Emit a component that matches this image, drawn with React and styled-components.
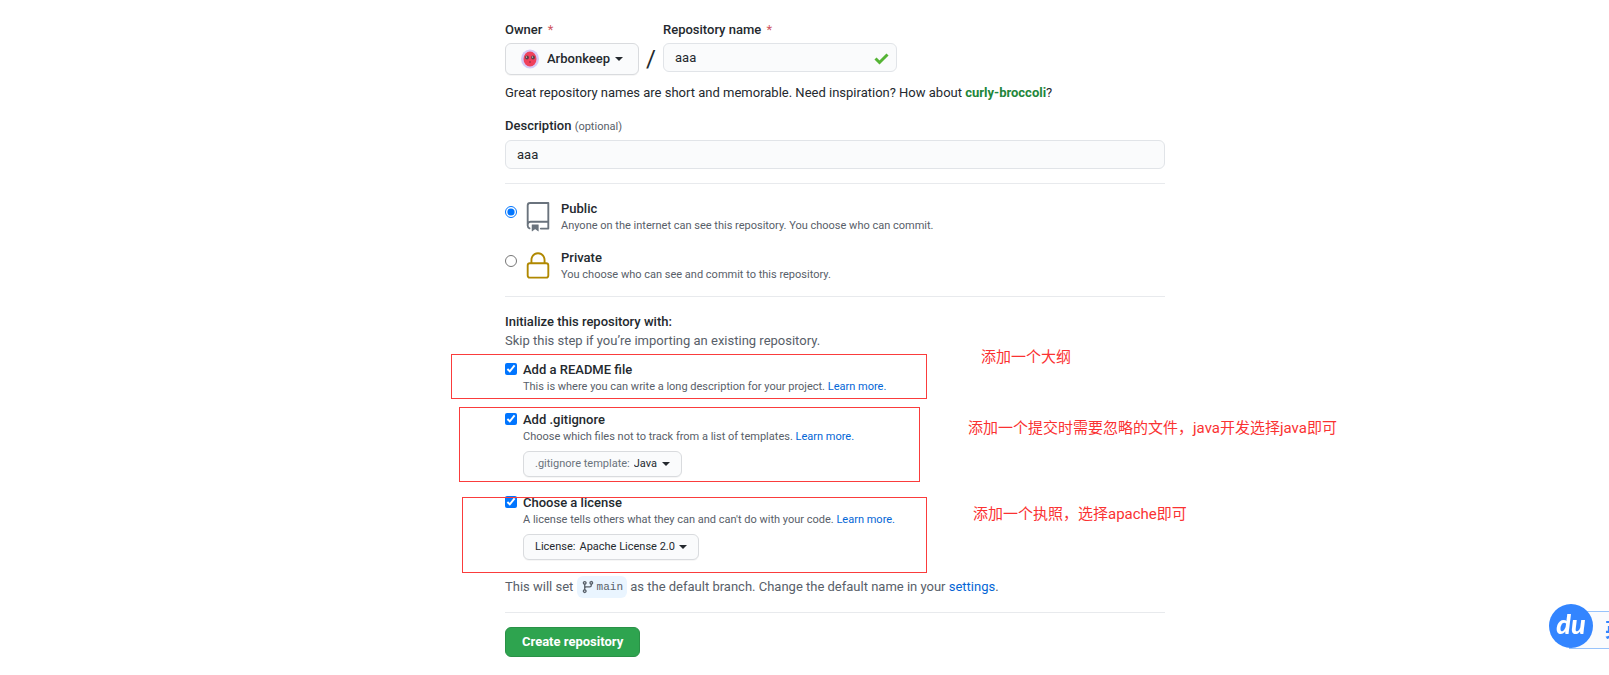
import React from 'react';
import styled, { createGlobalStyle } from 'styled-components';

const GlobalStyle = createGlobalStyle`
  *, *::before, *::after { box-sizing: border-box; }
  body {
    margin: 0;
    background: #fff;
    color: #24292e;
    font: 400 13px/18px Roboto, "Noto Sans CJK SC", sans-serif;
    overflow-x: hidden;
  }
  input, select, button { font: inherit; color: inherit; }
`;

const Page = styled.main`
  display: flex;
  justify-content: center;
  padding: 20px 0 18px 61px;
`;

const Form = styled.form`
  width: 100%;
  max-width: 660px;
`;

const Divider = styled.hr`
  height: 1px;
  margin: 14px 0;
  border: 0;
  background: #e8eaed;
`;

const NameRow = styled.div`
  display: flex;
  align-items: flex-start;
`;

const Field = styled.div`
  display: flex;
  flex-direction: column;
  align-items: ${(p) => (p.$fill ? 'stretch' : 'flex-start')};
  gap: 3px;
`;

const FieldLabel = styled.label`
  font-weight: 500;
  line-height: 20px;
`;

const Required = styled.span`
  margin-left: 2px;
  color: #d0575f;
  font-weight: 400;
`;

const Optional = styled.span`
  color: #586069;
  font-size: 11px;
  font-weight: 400;
`;

const Dropdown = styled.label`
  position: relative;
  display: inline-flex;
  align-items: center;
  gap: 4px;
  height: ${(p) => (p.$large ? '32px' : '26px')};
  padding: 0 ${(p) => (p.$large ? '15px' : '11px')};
  border: 1px solid #d9dbde;
  border-radius: 6px;
  background: #fafbfc;
  box-shadow: 0 1px 0 rgba(27, 31, 35, 0.04);
  color: ${(p) => (p.$muted ? '#6a737d' : '#24292e')};
  font-size: ${(p) => (p.$large ? '13px' : '11px')};
  cursor: pointer;
`;

const Select = styled.select`
  appearance: none;
  padding: 0;
  border: 0;
  background: transparent;
  color: #24292e;
  font-weight: ${(p) => (p.$strong ? 500 : 400)};
  cursor: pointer;
`;

const Caret = styled.span`
  width: 0;
  height: 0;
  border: 4px solid transparent;
  border-top-color: #24292e;
  border-bottom: 0;
`;

const Avatar = styled.svg`
  width: 18px;
  height: 20px;
  margin-right: 4px;
`;

const Slash = styled.span`
  width: 24px;
  padding-top: 23px;
  font-size: 24px;
  line-height: 32px;
  text-align: center;
`;

const InputFrame = styled.div`
  position: relative;
  width: ${(p) => (p.$short ? '234px' : '100%')};
`;

const TextInput = styled.input`
  display: block;
  width: 100%;
  height: 29px;
  padding: 0 11px;
  border: 1px solid #e1e4e8;
  border-radius: 6px;
  background: #fafbfc;
`;

const CheckMark = styled.svg`
  position: absolute;
  top: 10px;
  right: 8px;
  width: 15px;
  height: 12px;
`;

const Hint = styled.p`
  margin: 8px 0 13px;
  line-height: 20px;
`;

const Suggestion = styled.strong`
  color: #22863a;
  font-weight: 700;
`;

const Choices = styled.div`
  display: flex;
  flex-direction: column;
  gap: 15px;
`;

const Choice = styled.div`
  position: relative;
  display: flex;
  align-items: flex-start;
`;

const Tick = styled.input`
  flex: none;
  width: 12px;
  height: 12px;
  margin: ${(p) => (p.type === 'radio' ? '6px 6px 0 0' : '2px 6px 0 0')};
  accent-color: #0075ff;
`;

const ChoiceIcon = styled.svg`
  flex: none;
  width: 30px;
  height: 30px;
  margin: 2px 8px 0 0;
  fill: ${(p) => p.$tone};
`;

const ChoiceText = styled.div`
  display: flex;
  flex-direction: column;
  align-items: flex-start;
`;

const ChoiceTitle = styled.label`
  font-weight: 500;
`;

const Note = styled.span`
  color: #586069;
  font-size: 11px;
  line-height: 16px;
`;

const Link = styled.a`
  color: #0366d6;
  text-decoration: none;
`;

const Heading = styled.h2`
  margin: 0;
  font-size: 13px;
  font-weight: 500;
  line-height: 19px;
`;

const Muted = styled.p`
  margin: 0;
  color: #586069;
  line-height: ${(p) => (p.$roomy ? '22px' : '19px')};
`;

const RadioSection = styled.section`
  margin-bottom: -1px;
  padding-top: 2px;
`;

const InitSection = styled.section`
  display: flex;
  flex-direction: column;
  gap: 16px;
  padding-top: 1px;
`;

const Options = styled.div`
  display: flex;
  flex-direction: column;
  gap: 16px;
  margin: -5px 0 -1px;
`;

const DropdownSlot = styled.div`
  display: flex;
  padding: 6px 0 1px;
`;

const Highlight = styled.span`
  position: absolute;
  top: ${(p) => p.$top}px;
  left: ${(p) => p.$left}px;
  width: ${(p) => p.$width}px;
  height: ${(p) => p.$height}px;
  border: 1px solid #fa3c3c;
  pointer-events: none;
`;

const Remark = styled.span`
  position: absolute;
  top: ${(p) => p.$top}px;
  left: ${(p) => p.$left}px;
  color: #fa3232;
  font-size: 15px;
  line-height: 20px;
  white-space: nowrap;
`;

const Branch = styled.code`
  display: inline-flex;
  align-items: center;
  gap: 2px;
  height: 22px;
  padding: 0 4px;
  border-radius: 6px;
  background: #eaf5ff;
  font: 11px/22px "Liberation Mono", monospace;
  vertical-align: top;
`;

const BranchIcon = styled.svg`
  width: 14px;
  height: 14px;
  fill: #586069;
`;

const Submit = styled.button`
  display: block;
  height: 30px;
  padding: 0 16px;
  border: 1px solid #2a9147;
  border-radius: 6px;
  background: #2ea44f;
  color: #fff;
  font-weight: 700;
  cursor: pointer;
`;

const Assistant = styled.aside`
  position: fixed;
  right: 0;
  bottom: 26px;
  display: flex;
  align-items: center;
  width: 60px;
  height: 46px;
  overflow: hidden;
`;

const AssistantLogo = styled.span`
  z-index: 1;
  flex: none;
  width: 44px;
  height: 44px;
  border-radius: 50%;
  background: #3385ff;
  color: #fff;
  font: italic 900 27px/40px Lato, sans-serif;
  text-align: center;
`;

const AssistantMode = styled.span`
  flex: none;
  align-self: flex-end;
  width: 80px;
  height: 38px;
  margin-left: -24px;
  padding-left: 35px;
  border: 1px solid #98c3fb;
  background: #fafbfd;
  color: #3385ff;
  font: 700 20px/34px "Noto Sans CJK SC", sans-serif;
`;

const REPO = 'M3 2.75A2.75 2.75 0 015.75 0h14.5a.75.75 0 01.75.75v20.5a.75.75 0 01-.75.75h-6a.75.75 0 010-1.5h5.25v-4H6A1.5 1.5 0 004.5 18v.75c0 .716.43 1.334 1.05 1.605a.75.75 0 01-.6 1.374A3.25 3.25 0 013 18.75v-16zM19.5 1.5V15H6c-.546 0-1.059.146-1.5.401V2.75c0-.69.56-1.25 1.25-1.25H19.5z M7 18.25a.25.25 0 01.25-.25h5a.25.25 0 01.25.25v5.01a.25.25 0 01-.397.201l-2.206-1.604a.25.25 0 00-.294 0L7.397 23.46a.25.25 0 01-.397-.2v-5.01z';
const LOCK = 'M6 9V7.25C6 3.845 8.503 1 12 1s6 2.845 6 6.25V9h.5a2.5 2.5 0 012.5 2.5v8a2.5 2.5 0 01-2.5 2.5h-13A2.5 2.5 0 013 19.5v-8A2.5 2.5 0 015.5 9H6zm1.5-1.75C7.5 4.58 9.422 2.5 12 2.5c2.578 0 4.5 2.08 4.5 4.75V9h-9V7.25zm-3 4.25a1 1 0 011-1h13a1 1 0 011 1v8a1 1 0 01-1 1h-13a1 1 0 01-1-1v-8z';
const BRANCH = 'M11.75 2.5a.75.75 0 100 1.5.75.75 0 000-1.5zm-2.25.75a2.25 2.25 0 113 2.122V6A2.5 2.5 0 0110 8.5H6a1 1 0 00-1 1v1.128a2.251 2.251 0 11-1.5 0V5.372a2.25 2.25 0 111.5 0v1.836A2.492 2.492 0 016 7h4a1 1 0 001-1v-.628A2.25 2.25 0 019.5 3.25zM4.25 12a.75.75 0 100 1.5.75.75 0 000-1.5zM3.5 3.25a.75.75 0 111.5 0 .75.75 0 01-1.5 0z';

const visibilities = [
  { id: 'public', title: 'Public', icon: REPO, tone: '#6a737d', note: 'Anyone on the internet can see this repository. You choose who can commit.' },
  { id: 'private', title: 'Private', icon: LOCK, tone: '#b08800', note: 'You choose who can see and commit to this repository.' },
];

const options = [
  {
    id: 'readme', title: 'Add a README file',
    note: 'This is where you can write a long description for your project.',
    box: { $top: -7, $left: -54, $width: 476, $height: 45 },
    remark: { $top: -14, $left: 476, text: '添加一个大纲' },
  },
  {
    id: 'gitignore', title: 'Add .gitignore',
    note: 'Choose which files not to track from a list of templates.',
    menu: { label: '.gitignore template:', value: 'Java', muted: true },
    box: { $top: -4, $left: -46, $width: 461, $height: 75 },
    remark: { $top: 7, $left: 463, text: '添加一个提交时需要忽略的文件，java开发选择java即可' },
  },
  {
    id: 'license', title: 'Choose a license',
    note: "A license tells others what they can and can't do with your code.",
    menu: { label: 'License:', value: 'Apache License 2.0' },
    box: { $top: 3, $left: -43, $width: 465, $height: 76 },
    remark: { $top: 10, $left: 468, text: '添加一个执照，选择apache即可' },
  },
];

export default function App() {
  return (
    <>
      <GlobalStyle />
      <Page>
        <Form onSubmit={(e) => e.preventDefault()}>
          <NameRow>
            <Field>
              <FieldLabel htmlFor="owner">Owner <Required>*</Required></FieldLabel>
              <Dropdown $large htmlFor="owner">
                <Avatar viewBox="0 0 18 20" aria-hidden="true">
                  <ellipse cx="9" cy="10" rx="9" ry="9.5" fill="#d5c8f7" />
                  <ellipse cx="9" cy="10" rx="6.5" ry="7.5" fill="#f0405c" />
                  <circle cx="6" cy="8.5" r="1.9" fill="#59414b" />
                  <circle cx="12" cy="8.5" r="1.9" fill="#59414b" />
                  <circle cx="5.5" cy="8" r="0.6" fill="#fff" />
                  <circle cx="11.5" cy="8" r="0.6" fill="#fff" />
                  <path d="M8 13h2" stroke="#8b2a3d" />
                </Avatar>
                <Select id="owner" $strong><option>Arbonkeep</option></Select>
                <Caret />
              </Dropdown>
            </Field>
            <Slash>/</Slash>
            <Field>
              <FieldLabel htmlFor="name">Repository name <Required>*</Required></FieldLabel>
              <InputFrame $short>
                <TextInput id="name" type="text" defaultValue="aaa" />
                <CheckMark viewBox="0 0 15 12" aria-hidden="true">
                  <path d="M1.5 5.5l4 4 8-8" fill="none" stroke="#55b435" strokeWidth="3" />
                </CheckMark>
              </InputFrame>
            </Field>
          </NameRow>
          <Hint>
            Great repository names are short and memorable. Need inspiration? How about <Suggestion>curly-broccoli</Suggestion>?
          </Hint>
          <Field $fill>
            <FieldLabel htmlFor="description">Description <Optional>(optional)</Optional></FieldLabel>
            <InputFrame>
              <TextInput id="description" type="text" defaultValue="aaa" />
            </InputFrame>
          </Field>
          <Divider />
          <RadioSection>
            <Choices>
              {visibilities.map((v) => (
                <Choice key={v.id}>
                  <Tick type="radio" id={v.id} name="visibility" defaultChecked={v.id === 'public'} />
                  <ChoiceIcon viewBox="0 0 24 24" $tone={v.tone} aria-hidden="true"><path d={v.icon} fillRule="evenodd" /></ChoiceIcon>
                  <ChoiceText>
                    <ChoiceTitle htmlFor={v.id}>{v.title}</ChoiceTitle>
                    <Note>{v.note}</Note>
                  </ChoiceText>
                </Choice>
              ))}
            </Choices>
          </RadioSection>
          <Divider />
          <InitSection>
            <div>
              <Heading>Initialize this repository with:</Heading>
              <Muted>Skip this step if you’re importing an existing repository.</Muted>
            </div>
            <Options>
              {options.map((o) => (
                <Choice key={o.id}>
                  <Tick type="checkbox" id={o.id} defaultChecked />
                  <ChoiceText>
                    <ChoiceTitle htmlFor={o.id}>{o.title}</ChoiceTitle>
                    <Note>{o.note} <Link href="#learn">Learn more.</Link></Note>
                    {o.menu && (
                      <DropdownSlot>
                        <Dropdown $muted={o.menu.muted}>
                          {o.menu.label}
                          <Select><option>{o.menu.value}</option></Select>
                          <Caret />
                        </Dropdown>
                      </DropdownSlot>
                    )}
                  </ChoiceText>
                  <Highlight {...o.box} />
                  <Remark $top={o.remark.$top} $left={o.remark.$left} lang="zh-CN">{o.remark.text}</Remark>
                </Choice>
              ))}
            </Options>
            <Muted $roomy>
              This will set{' '}
              <Branch><BranchIcon viewBox="0 0 16 16" aria-hidden="true"><path d={BRANCH} fillRule="evenodd" /></BranchIcon>main</Branch>
              {' '}as the default branch. Change the default name in your <Link href="#settings">settings</Link>.
            </Muted>
          </InitSection>
          <Divider />
          <Submit type="submit">Create repository</Submit>
        </Form>
      </Page>
      <Assistant>
        <AssistantLogo>du</AssistantLogo>
        <AssistantMode lang="zh-CN">英</AssistantMode>
      </Assistant>
    </>
  );
}
